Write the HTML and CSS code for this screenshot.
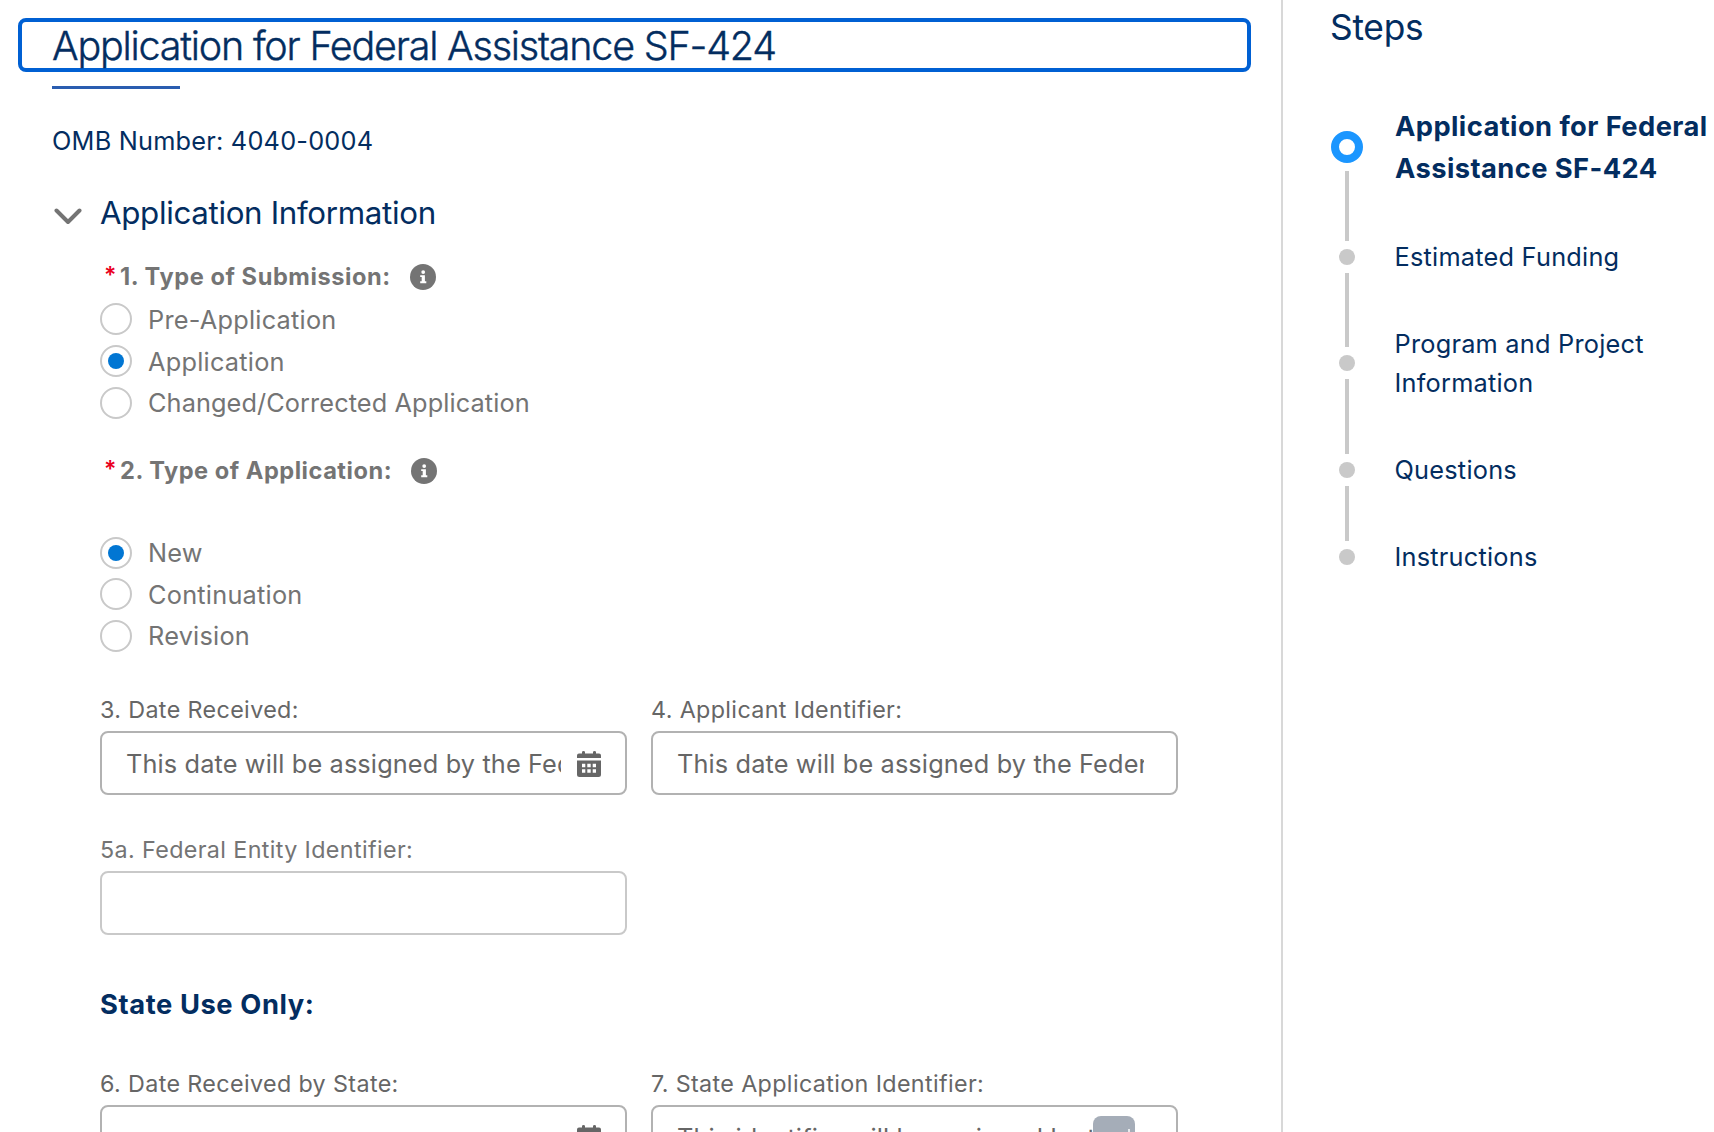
FILE: index.html
```html
<!DOCTYPE html>
<html lang="en">
<head>
<meta charset="utf-8">
<title>Application for Federal Assistance SF-424</title>
<link rel="stylesheet" href="styles.css">
</head>
<body>
<svg class="defs" aria-hidden="true">
  <symbol id="info" viewBox="0 0 26 26">
    <circle cx="13" cy="13" r="13" fill="#747474"/>
    <circle cx="13.2" cy="8.1" r="1.9" fill="#fff"/>
    <path d="M10.2 11.2h4.7v6.1h1.4v1.900h-6.1v-1.900h1.500v-4.200h-1.500z" fill="#fff"/>
  </symbol>
  <symbol id="calendar" viewBox="0 0 24 26">
    <path fill="#666" d="M0 7V4.500Q0 2.500 2 2.500H5V1.300Q5 0 6.500 0T8 1.300V2.500H16V1.300Q16 0 17.500 0T19 1.300V2.500H22Q24 2.500 24 4.500V7Z"/>
    <path fill="#666" fill-rule="evenodd" d="M0 9.500H24V23.500Q24 26 21.500 26H2.500Q0 26 0 23.500ZM5 12.700V16.300H8.300V12.700ZM10.300 12.700V16.300H13.700V12.700ZM15.700 12.700V16.300H19V12.700ZM5 18.300V21.800H8.300V18.300ZM10.300 18.300V21.800H13.700V18.300ZM15.700 18.300V21.800H19V18.300Z"/>
  </symbol>
</svg>
<div class="page">
  <main class="form">
    <h1 class="title">Application for Federal Assistance SF-424</h1>
    <div class="title-rule"></div>
    <p class="omb">OMB Number: 4040-0004</p>
    <div class="section-head">
      <svg class="chevron" viewBox="0 0 28 18"><path d="M2.500 2.500 14 14 25.500 2.500" fill="none" stroke="#747474" stroke-width="4" stroke-linecap="round" stroke-linejoin="round"/></svg>
      <h2>Application Information</h2>
    </div>
    <div class="section-body">
      <div class="question">
        <span class="req">*</span><span class="legend">1. Type of Submission:</span>
        <svg class="info"><use href="#info"/></svg>
      </div>
      <div class="radios">
        <label class="radio"><i></i><span>Pre-Application</span></label>
        <label class="radio on"><i></i><span>Application</span></label>
        <label class="radio long"><i></i><span>Changed/Corrected Application</span></label>
      </div>
      <div class="question second">
        <span class="req">*</span><span class="legend">2. Type of Application:</span>
        <svg class="info"><use href="#info"/></svg>
      </div>
      <div class="radios spaced">
        <label class="radio on"><i></i><span>New</span></label>
        <label class="radio"><i></i><span>Continuation</span></label>
        <label class="radio"><i></i><span>Revision</span></label>
      </div>
      <div class="fields">
        <div class="field readonly">
          <label>3. Date Received:</label>
          <div class="control date">
            <input placeholder="This date will be assigned by the Federal Agency">
            <svg class="calendar"><use href="#calendar"/></svg>
          </div>
        </div>
        <div class="field readonly">
          <label>4. Applicant Identifier:</label>
          <div class="control"><input placeholder="This date will be assigned by the Federal Agency"></div>
        </div>
        <div class="field">
          <label>5a. Federal Entity Identifier:</label>
          <div class="control"><input></div>
        </div>
      </div>
      <h3>State Use Only:</h3>
      <div class="fields">
        <div class="field readonly">
          <label>6. Date Received by State:</label>
          <div class="control date">
            <input>
            <svg class="calendar"><use href="#calendar"/></svg>
          </div>
        </div>
        <div class="field readonly">
          <label>7. State Application Identifier:</label>
          <div class="control filler">
            <input placeholder="This identifier will be assigned by the State">
            <div class="autofill"><i></i></div>
          </div>
        </div>
      </div>
    </div>
  </main>
  <aside class="steps">
    <h2>Steps</h2>
    <ol>
      <li class="current"><span class="rail"><i class="dot"></i><i class="line l1"></i></span><span class="name">Application for Federal Assistance SF-424</span></li>
      <li><span class="rail"><i class="dot"></i><i class="line l2"></i></span><span class="name">Estimated Funding</span></li>
      <li class="two"><span class="rail"><i class="dot"></i><i class="line l3"></i></span><span class="name">Program and Project Information</span></li>
      <li><span class="rail"><i class="dot"></i><i class="line l4"></i></span><span class="name">Questions</span></li>
      <li><span class="rail"><i class="dot"></i></span><span class="name">Instructions</span></li>
    </ol>
  </aside>
</div>
</body>
</html>
```
FILE: styles.css
```css
* { box-sizing: border-box; }
html, body { height: 100%; }
body {
  margin: 0;
  overflow: hidden;
  background: #fff;
  font-family: Inter, "Liberation Sans", sans-serif;
  color: #032d60;
}
h1, h2, h3, p, ol { margin: 0; padding: 0; font-weight: 400; }
.defs { display: none; }
.page { display: flex; height: 1132px; overflow: hidden; }

/* Form column */
.form { flex: none; width: 1281px; padding: 18px 30px 0 18px; }
.title {
  height: 54px;
  padding: 2px 0 0 30px;
  border: 4px solid #0060d3;
  border-radius: 8px;
  font-size: 39.5px;
  font-weight: 300;
  line-height: 45px;
  letter-spacing: -1.22px;
  -webkit-text-stroke: .4px #032d60;
  white-space: nowrap;
}
.title-rule { width: 128px; height: 3px; margin: 14px 0 0 34px; background: #2a5db0; }
.omb {
  margin: 32px 0 0 34px;
  font-size: 25.3px;
  line-height: 40px;
  letter-spacing: .22px;
}
.section-head { display: flex; align-items: center; margin: 28px 0 0 36px; }
.chevron { width: 28px; height: 18px; margin: 7px 18px 0 0; }
.section-head h2 { font-size: 31.3px; line-height: 48px; letter-spacing: -.33px; }
.section-body { padding: 22px 0 0 82px; }

.question {
  display: flex;
  align-items: center;
  height: 36px;
  padding-left: 4px;
  font-size: 23.6px;
  font-weight: 700;
  letter-spacing: .57px;
  color: #747474;
}
.question.second { margin-top: 29px; letter-spacing: .52px; }
.legend { padding-bottom: 2px; }
.req { width: 16px; padding-bottom: 5px; color: #ea001e; font-size: 23px; font-weight: 600; letter-spacing: 0; }
.info { width: 26px; height: 26px; margin-left: 19px; }

.radios { margin-top: 3px; height: 126px; --row: 42px; }
.radios.spaced { margin-top: 43px; height: 125px; --row: 41.6px; }
.radio {
  display: flex;
  align-items: center;
  gap: 16px;
  height: var(--row);
  font-size: 25.3px;
  letter-spacing: .24px;
  color: #747474;
}
.radio.long { letter-spacing: .1px; }
.radio.long span { padding-bottom: 2px; }
.radio i {
  display: grid;
  place-items: center;
  width: 32px;
  height: 32px;
  border: 2px solid #c9c9c9;
  border-radius: 50%;
}
.radio.on i::after {
  content: "";
  width: 16px;
  height: 16px;
  border-radius: 50%;
  background: #0176d3;
}

.fields {
  display: grid;
  grid-template-columns: 527px 527px;
  gap: 36px 24px;
  margin-top: 34px;
}
.field label {
  display: block;
  padding-top: 1px;
  margin-bottom: 3px;
  font-size: 23.3px;
  line-height: 36px;
  letter-spacing: .37px;
  color: #747474;
}
.field.readonly label { color: #666; }
.control {
  position: relative;
  display: flex;
  align-items: center;
  height: 64px;
  padding: 0 32px 0 24px;
  border: 2px solid #c9c9c9;
  border-radius: 8px;
}
.readonly .control { border-color: #b2b2b2; }
.control.date { padding-right: 24px; }
.control.filler { padding-right: 83px; }
.control input {
  flex: 1;
  min-width: 0;
  height: 60px;
  padding: 1px 0 0;
  border: 0;
  outline: 0;
  background: transparent;
  font-family: inherit;
  font-size: 25.3px;
  letter-spacing: .14px;
}
.control input::placeholder { color: #666; opacity: 1; }
.calendar { width: 24px; height: 26px; margin: 1px 0 0 16px; }
.autofill {
  position: absolute;
  top: 9px;
  right: 41px;
  width: 42px;
  height: 42px;
  border-radius: 8px;
  background: #a5adb8;
}
.autofill i {
  display: block;
  width: 2px;
  height: 12px;
  margin: 13px 0 0 35px;
  background: #e8eaed;
}
h3 {
  margin-top: 48px;
  padding-top: 1px;
  font-size: 27.3px;
  font-weight: 700;
  line-height: 42px;
  letter-spacing: .6px;
}
h3 + .fields { margin-top: 39px; }

/* Progress column */
.steps { flex: 1; min-width: 0; border-left: 2px solid #d8d8d8; padding: 4px 0 0 47px; }
.steps h2 { font-size: 35.3px; line-height: 48px; letter-spacing: -.26px; }
.steps ol { list-style: none; margin-top: 53px; }
.steps li { display: flex; min-height: 39px; margin-bottom: 48px; }
.rail { position: relative; flex: none; width: 34px; margin-right: 30.5px; display: flex; align-items: center; }
.dot { width: 16px; height: 16px; margin-left: 9px; border-radius: 50%; background: #c9c9c9; }
.line { position: absolute; left: 15px; top: calc(50% + 16px); width: 4px; background: #c9c9c9; }
.name { font-size: 25.3px; line-height: 39px; letter-spacing: .24px; }
.current { height: 84px; }
.current .rail { margin-right: 31px; }
.current .dot { width: 32px; height: 32px; margin-left: 1px; border: 8px solid #1b96ff; background: #fff; }
.current .name { flex: none; width: 318px; padding-top: 1px; font-size: 27.3px; font-weight: 700; line-height: 42px; letter-spacing: .42px; }
.current .line { top: calc(50% + 24px); }
.two .name { width: 270px; }
.l1 { height: 70px; }
.l2 { height: 74px; }
.l3 { height: 75px; }
.l4 { height: 55px; }
```
